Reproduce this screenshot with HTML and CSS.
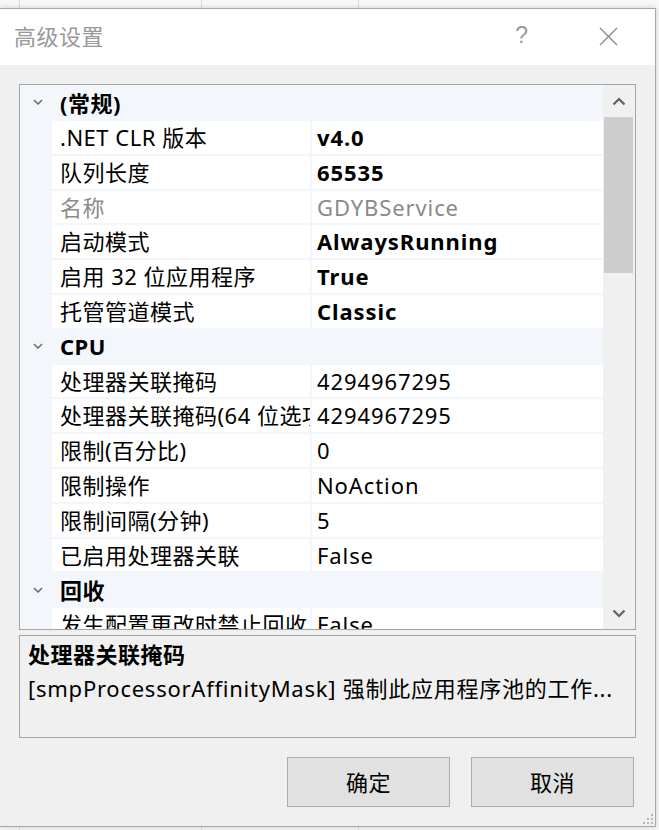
FILE: index.html
```html
<!DOCTYPE html>
<html lang="zh-CN">
<head>
<meta charset="utf-8">
<title>高级设置</title>
<link rel="stylesheet" href="styles.css">
</head>
<body>
<div class="dialog">
  <div class="titlebar">
    <span class="title">高级设置</span>
    <span class="help">?</span>
    <svg class="close" width="19" height="19" viewBox="0 0 19 19"><path d="M1 1 L18 18 M18 1 L1 18" stroke="#8a8a8a" stroke-width="1.4" fill="none"/></svg>
  </div>
  <div class="body">
    <div class="grid">
      <div class="rows">
        <div class="cat"><span class="chev"><svg width="10" height="6" viewBox="0 0 10 6"><path d="M1 1 L5 5 L9 1" stroke="#6a6a6a" stroke-width="1.5" fill="none"/></svg></span><span class="cat-name">(常规)</span></div>
        <div class="row"><span class="gut"></span><span class="name">.NET CLR 版本</span><span class="val bold">v4.0</span></div>
        <div class="row"><span class="gut"></span><span class="name">队列长度</span><span class="val bold">65535</span></div>
        <div class="row dis"><span class="gut"></span><span class="name">名称</span><span class="val">GDYBService</span></div>
        <div class="row"><span class="gut"></span><span class="name">启动模式</span><span class="val bold">AlwaysRunning</span></div>
        <div class="row"><span class="gut"></span><span class="name">启用 32 位应用程序</span><span class="val bold">True</span></div>
        <div class="row"><span class="gut"></span><span class="name">托管管道模式</span><span class="val bold">Classic</span></div>
        <div class="cat"><span class="chev"><svg width="10" height="6" viewBox="0 0 10 6"><path d="M1 1 L5 5 L9 1" stroke="#6a6a6a" stroke-width="1.5" fill="none"/></svg></span><span class="cat-name">CPU</span></div>
        <div class="row"><span class="gut"></span><span class="name">处理器关联掩码</span><span class="val">4294967295</span></div>
        <div class="row"><span class="gut"></span><span class="name">处理器关联掩码(64 位选项)</span><span class="val">4294967295</span></div>
        <div class="row"><span class="gut"></span><span class="name">限制(百分比)</span><span class="val">0</span></div>
        <div class="row"><span class="gut"></span><span class="name">限制操作</span><span class="val">NoAction</span></div>
        <div class="row"><span class="gut"></span><span class="name">限制间隔(分钟)</span><span class="val">5</span></div>
        <div class="row"><span class="gut"></span><span class="name">已启用处理器关联</span><span class="val">False</span></div>
        <div class="cat"><span class="chev"><svg width="10" height="6" viewBox="0 0 10 6"><path d="M1 1 L5 5 L9 1" stroke="#6a6a6a" stroke-width="1.5" fill="none"/></svg></span><span class="cat-name">回收</span></div>
        <div class="row"><span class="gut"></span><span class="name">发生配置更改时禁止回收</span><span class="val">False</span></div>
      </div>
      <div class="scrollbar">
        <div class="sb-btn"><svg width="14" height="9" viewBox="0 0 14 9"><path d="M1.5 7.5 L7 2 L12.5 7.5" stroke="#606060" stroke-width="2.2" fill="none"/></svg></div>
        <div class="sb-track"><div class="sb-thumb"></div></div>
        <div class="sb-btn"><svg width="14" height="9" viewBox="0 0 14 9"><path d="M1.5 1.5 L7 7 L12.5 1.5" stroke="#606060" stroke-width="2.2" fill="none"/></svg></div>
      </div>
    </div>
    <div class="desc">
      <div class="desc-title">处理器关联掩码</div>
      <div class="desc-text">[smpProcessorAffinityMask] 强制此应用程序池的工作...</div>
    </div>
    <div class="buttons">
      <div class="btn">确定</div>
      <div class="btn">取消</div>
    </div>
  </div>
  <svg class="grip" width="12" height="12" viewBox="0 0 12 12">
    <rect x="9" y="1" width="2" height="2" fill="#b8b8b8"/>
    <rect x="5" y="5" width="2" height="2" fill="#b8b8b8"/>
    <rect x="9" y="5" width="2" height="2" fill="#b8b8b8"/>
    <rect x="1" y="9" width="2" height="2" fill="#b8b8b8"/>
    <rect x="5" y="9" width="2" height="2" fill="#b8b8b8"/>
    <rect x="9" y="9" width="2" height="2" fill="#b8b8b8"/>
  </svg>
</div>
</body>
</html>
```

FILE: styles.css
```css
* { box-sizing: border-box; }
html, body { margin: 0; padding: 0; }
body {
  width: 659px;
  height: 830px;
  overflow: hidden;
  background-color: #f7f7f7;
  background-image:
    linear-gradient(to right, transparent 19px, #dcdcdc 19px, #dcdcdc 20px, transparent 20px),
    linear-gradient(to right, transparent 201px, #dcdcdc 201px, #dcdcdc 202px, transparent 202px),
    linear-gradient(to right, transparent 358px, #dcdcdc 358px, #dcdcdc 359px, transparent 359px);
  font-family: "Noto Sans", "Noto Sans CJK SC", sans-serif;
  font-size: 22px;
  color: #000;
  padding-top: 8px;
}
.dialog {
  position: relative;
  width: 656px;
  height: 819px;
  border-top: 1px solid #a8a8a8;
  border-right: 1px solid #a8a8a8;
  border-bottom: 1px solid #a8a8a8;
  background: #f0f0f0;
  box-shadow: 0 0 5px rgba(0,0,0,0.18);
  display: flex;
  flex-direction: column;
}
.titlebar {
  height: 56px;
  background: #fff;
  display: flex;
  align-items: center;
  padding-left: 14px;
  color: #999;
}
.title {
  font-size: 22px;
  flex: 1;
  line-height: 1;
  padding-bottom: 2px;
  letter-spacing: 0.5px;
}
.help {
  font-family: "Liberation Sans", sans-serif;
  font-size: 23px;
  color: #9a9a9a;
  margin-right: 71px;
  padding-bottom: 4px;
}
.close {
  margin-right: 37px;
  margin-bottom: 2px;
}
.body {
  flex: 1;
  display: flex;
  flex-direction: column;
  padding: 19px 19px 19px 19px;
}
.grid {
  height: 546px;
  border: 1px solid #a5a5a5;
  background: #fff;
  display: flex;
  overflow: hidden;
}
.rows {
  width: 583px;
  overflow: hidden;
  background: #f3f6fa;
}
.cat, .row {
  height: 34.8px;
  display: flex;
  white-space: nowrap;
}
.cat:first-child { height: 36px; }
.cat {
  align-items: center;
  background: #f3f6fa;
  font-weight: bold;
}
.chev {
  width: 32px;
  display: flex;
  justify-content: center;
  padding-left: 4px;
  padding-bottom: 2px;
}
.cat-name {
  padding-left: 8px;
  padding-bottom: 3px;
  letter-spacing: 0.5px;
}
.row {
  padding-bottom: 2px;
}
.gut { width: 32px; flex: none; }
.name {
  width: 258px;
  flex: none;
  background: #fff;
  padding-left: 8px;
  padding-top: 1px;
  overflow: hidden;
  margin-right: 2px;
  line-height: 31px;
  letter-spacing: 0.5px;
}
.val {
  flex: 1;
  background: #fff;
  padding-left: 5px;
  padding-top: 1px;
  line-height: 31px;
  overflow: hidden;
  letter-spacing: 0.9px;
}
.bold { font-weight: bold; }
.dis .name, .dis .val { color: #8a8a8a; }
.scrollbar {
  width: 32px;
  background: #f0f0f0;
  display: flex;
  flex-direction: column;
}
.sb-btn {
  height: 32px;
  display: flex;
  align-items: center;
  justify-content: center;
}
.sb-track {
  flex: 1;
  padding: 0 2px 0 1px;
}
.sb-thumb {
  height: 156px;
  background: #cdcdcd;
}
.desc {
  margin-top: 5px;
  height: 103px;
  border: 1px solid #a5a5a5;
  padding: 3px 8px 0 8px;
}
.desc-title {
  font-weight: bold;
  line-height: 31px;
  letter-spacing: 0.5px;
}
.desc-text {
  line-height: 36px;
  white-space: nowrap;
  letter-spacing: 0.75px;
}
.buttons {
  margin-top: 19px;
  display: flex;
  justify-content: flex-end;
  gap: 21px;
  padding-right: 2px;
}
.btn {
  width: 163px;
  height: 50px;
  background: #e1e1e1;
  border: 1px solid #adadad;
  display: flex;
  align-items: center;
  justify-content: center;
  padding-bottom: 2px;
  letter-spacing: 0.5px;
}
.grip {
  position: absolute;
  right: 1px;
  bottom: 1px;
}
```
